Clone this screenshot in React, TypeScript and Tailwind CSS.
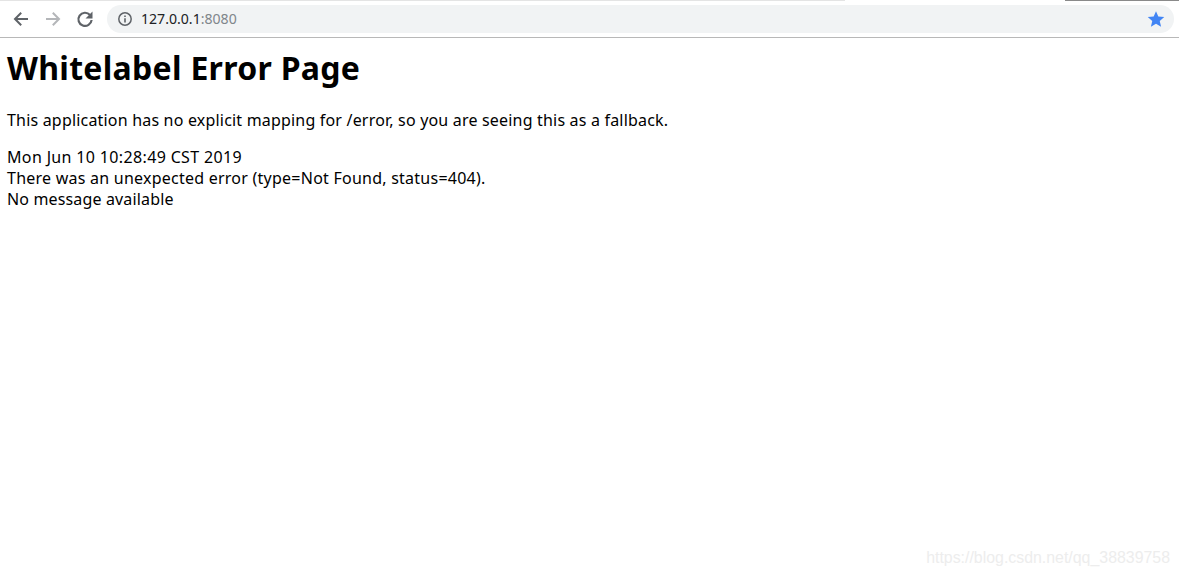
import React from "react";

export default function App() {
  return (
    <div className="relative h-[578px] w-[1179px] overflow-hidden bg-white font-['Noto_Sans','Open_Sans',sans-serif] text-black">
      <div className="absolute top-0 left-0 h-px w-[845px] bg-[#e4e4e4]" />
      <div className="absolute top-0 right-0 h-px w-[114px] bg-[#8a8a8a]" />
      <div className="flex h-[38px] items-center border-b border-[#b8b8b8] bg-white pr-[5px] pl-[12px]">
        <svg width="18" height="18" viewBox="0 0 18 18" className="mr-[14px]">
          <path d="M16 9H3M9.2 2.8 3 9l6.2 6.2" fill="none" stroke="#5f6368" strokeWidth="2" />
        </svg>
        <svg width="18" height="18" viewBox="0 0 18 18" className="mr-[14px]">
          <path d="M2 9h13M8.8 2.8 15 9l-6.2 6.2" fill="none" stroke="#b4b6b9" strokeWidth="2" />
        </svg>
        <svg width="18" height="18" viewBox="0 0 18 18" className="mr-[13px]">
          <path d="M14 5a6.6 6.6 0 1 0 1.6 5" fill="none" stroke="#5f6368" strokeWidth="2.2" />
          <path d="M16.5 1.5v7h-7z" fill="#5f6368" />
        </svg>
        <div className="mt-px flex h-[28px] flex-1 items-center rounded-full bg-[#f1f3f4] pr-[9px] pl-[10px]">
          <svg width="16" height="16" viewBox="0 0 16 16" className="mr-[8px]">
            <circle cx="8" cy="8" r="6.2" fill="none" stroke="#5f6368" strokeWidth="1.5" />
            <path d="M8 7.2v4.2M8 4.4v1.6" stroke="#5f6368" strokeWidth="1.6" />
          </svg>
          <span className="text-[14.1px] text-[#202124]">
            127.0.0.1<span className="text-[#80868b]">:8080</span>
          </span>
          <svg width="18" height="18" viewBox="0 0 24 24" className="ml-auto">
            <path d="M12 1.5l3.1 7.2 7.9.7-6 5.2 1.8 7.7L12 18.2l-6.8 4.1L7 14.6 1 9.4l7.9-.7z" fill="#4285f4" />
          </svg>
        </div>
      </div>
      <div className="pl-[7px]">
        <h1 className="mt-[10px] text-[32px] leading-[40px] font-bold tracking-[0.29px]">Whitelabel Error Page</h1>
        <p className="mt-[22px] text-[16px] leading-[21px] tracking-[0.19px]">This application has no explicit mapping for /error, so you are seeing this as a fallback.</p>
        <div className="mt-[16px] text-[16px] leading-[21px]">
          <div className="tracking-[0.35px]">Mon Jun 10 10:28:49 CST 2019</div>
          <div className="tracking-[0.24px]">There was an unexpected error (type=Not Found, status=404).</div>
          <div className="tracking-[0.15px]">No message available</div>
        </div>
      </div>
      <div className="absolute right-[9px] bottom-[8px] font-['Liberation_Sans',sans-serif] text-[15.9px] text-[#ededed]">https://blog.csdn.net/qq_38839758</div>
    </div>
  );
}
